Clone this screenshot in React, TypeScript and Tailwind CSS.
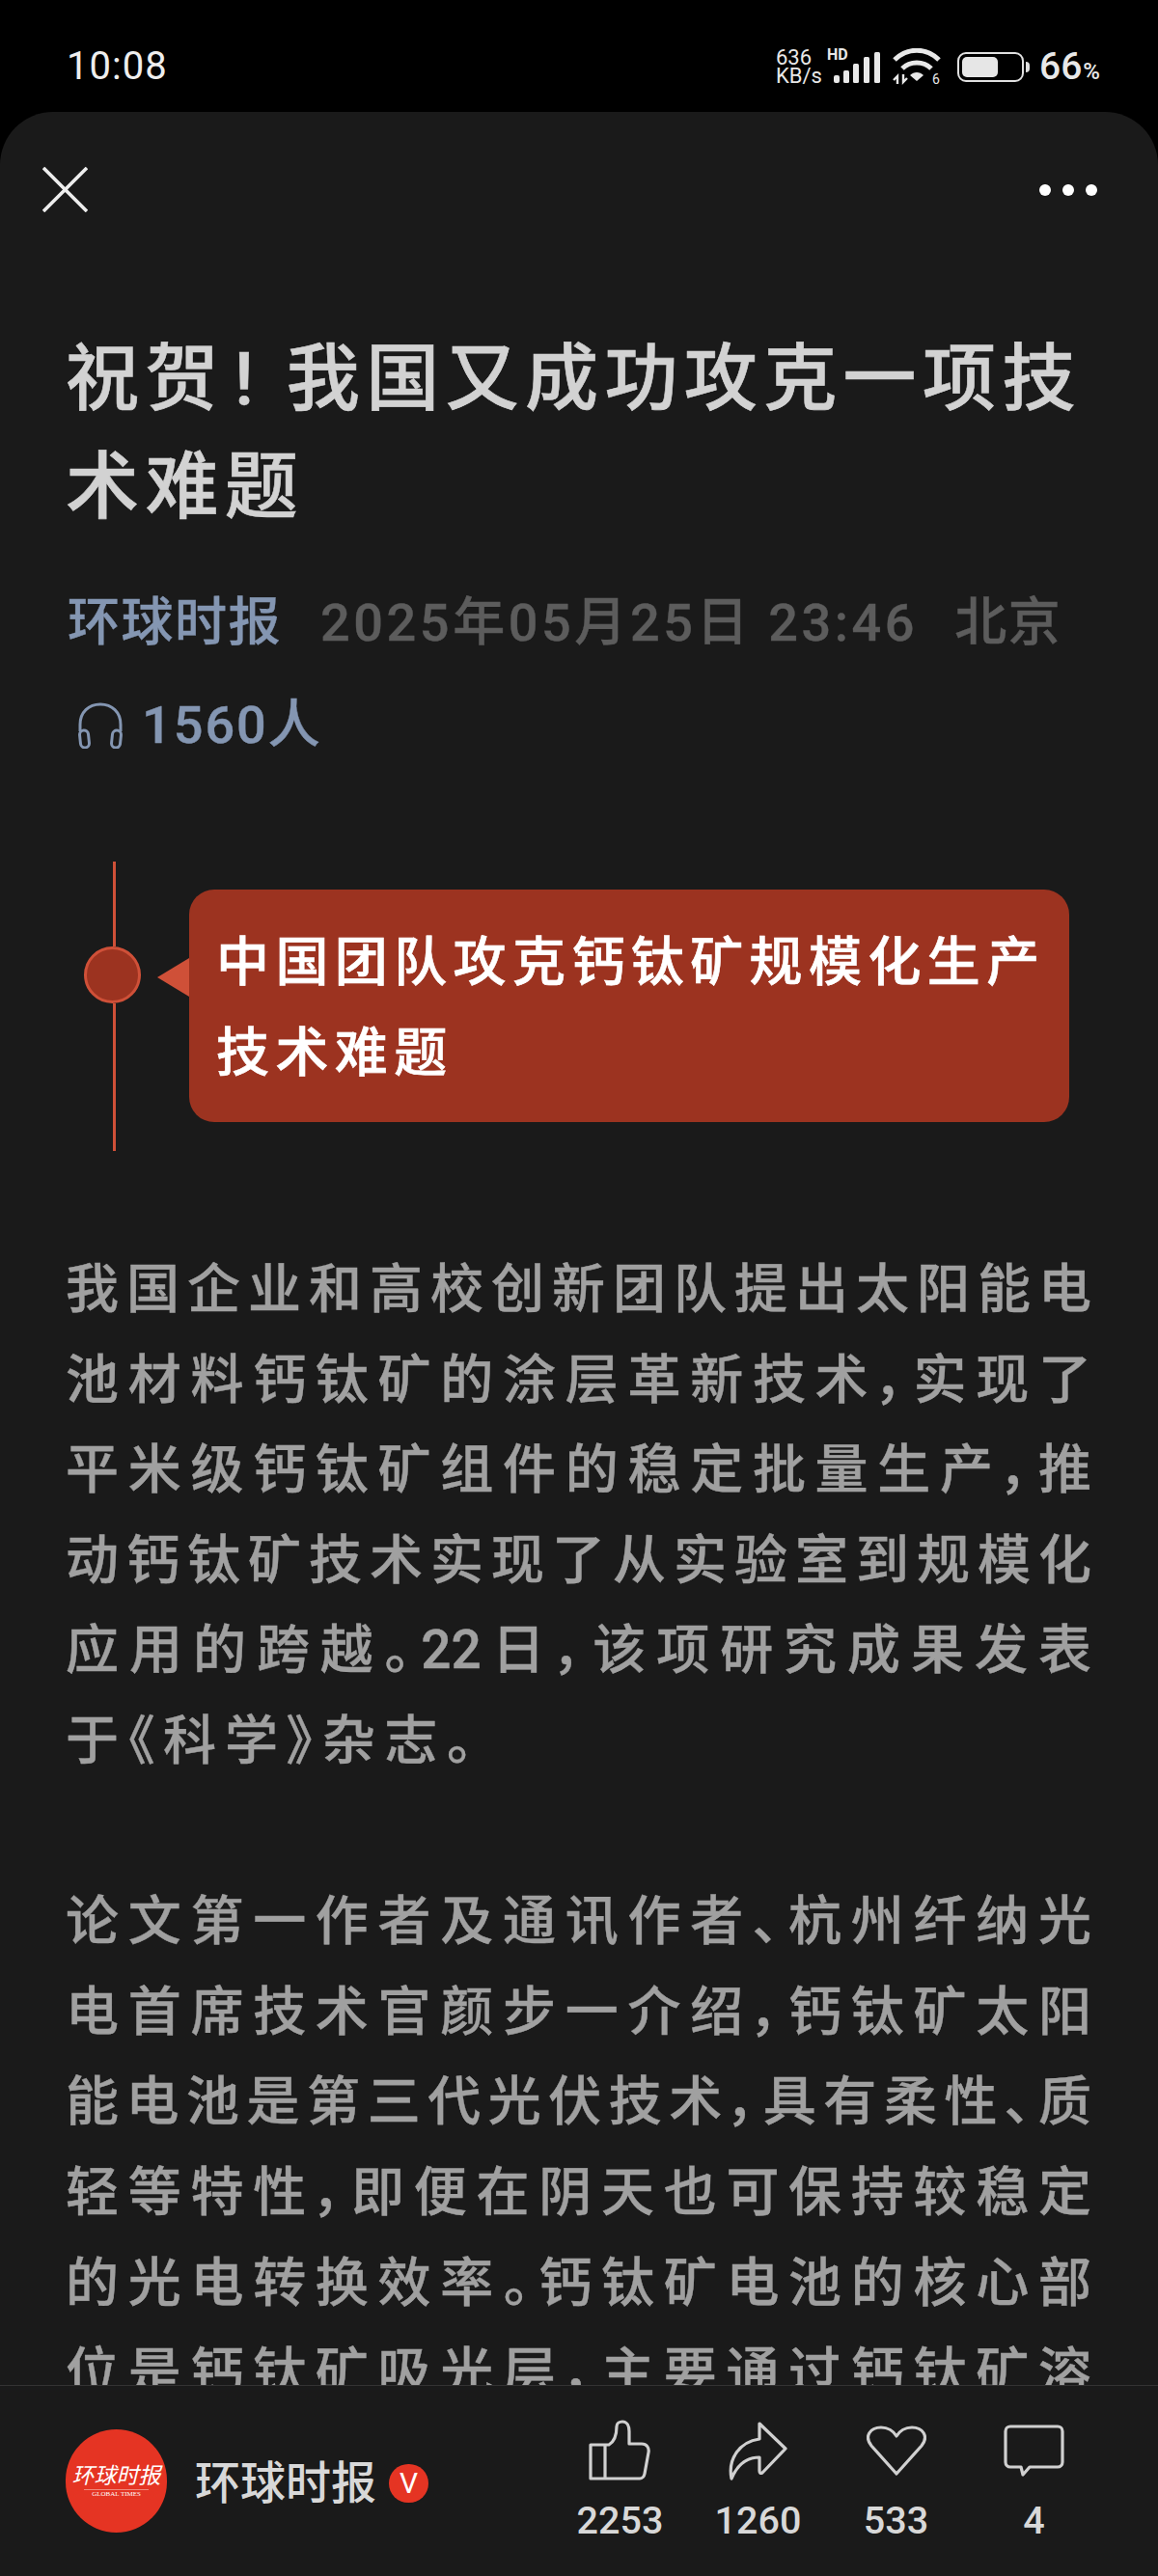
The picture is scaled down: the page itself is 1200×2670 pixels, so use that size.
import React from 'react';

const firstParagraph = [
  '我国企业和高校创新团队提出太阳能电',
  '池材料钙钛矿的涂层革新技术，实现了',
  '平米级钙钛矿组件的稳定批量生产，推',
  '动钙钛矿技术实现了从实验室到规模化',
  '应用的跨越。22日，该项研究成果发表',
];

const secondParagraph = [
  '论文第一作者及通讯作者、杭州纤纳光',
  '电首席技术官颜步一介绍，钙钛矿太阳',
  '能电池是第三代光伏技术，具有柔性、质',
  '轻等特性，即便在阴天也可保持较稳定',
  '的光电转换效率。钙钛矿电池的核心部',
  '位是钙钛矿吸光层，主要通过钙钛矿溶',
];

const StatusIcons: React.FC = () => (
  <div className="flex items-center font-['Roboto',sans-serif] text-[#e8e8e8]">
    <div className="flex flex-col text-[22px] leading-[19px] w-[60px]">
      <span>636</span>
      <span>KB/s</span>
    </div>
    <div className="relative w-[48px] h-[32px] mt-[1px]">
      <span className="absolute left-[-7px] top-[-6px] text-[16px] leading-[18px] font-bold">HD</span>
      <svg width="48" height="32" viewBox="0 0 48 32" fill="currentColor">
        <rect x="0" y="24" width="6" height="8" rx="2" />
        <rect x="10" y="19" width="6" height="13" rx="1.5" />
        <rect x="20" y="12" width="6" height="20" rx="1.5" />
        <rect x="31" y="5" width="6" height="27" rx="1.5" />
        <rect x="42" y="0" width="6" height="32" rx="1.5" />
      </svg>
    </div>
    <svg className="ml-[13px]" width="50" height="38" viewBox="0 0 50 38" fill="none" stroke="currentColor">
      <path d="M2 12C15 -1 35 -1 48 12" strokeWidth="5" />
      <path d="M10 21C18 13 32 13 40 21" strokeWidth="5" />
      <path d="M18 28C22 24 28 24 32 28L25 34Z" fill="currentColor" stroke="none" />
      <path d="M5 37V29L1 33M11 27V35L15 31" strokeWidth="2.4" />
      <text x="41" y="37" fontSize="14" fill="currentColor" stroke="none">6</text>
    </svg>
    <div className="ml-[17px] w-[69px] h-[31px] rounded-[9px] border-2 border-[#e0e0e0] p-[3px] mt-[1px]">
      <div className="w-[37px] h-full rounded-[5px] bg-[#e6e6e6]" />
    </div>
    <div className="ml-[2px] w-[4px] h-[11px] rounded-r-full bg-[#e0e0e0]" />
    <span className="ml-[10px] text-[39px] leading-[40px] font-medium">66</span>
    <span className="ml-[1px] mt-[10px] text-[24px] leading-[24px] font-medium">%</span>
  </div>
);

const ThumbIcon: React.FC = () => (
  <svg width="65" height="64" viewBox="-2 -2 65 64" fill="none" stroke="#d0d0d0" strokeWidth="3.2" strokeLinejoin="round">
    <path d="M0 24H19C24 21 27 14 27 5C27 2 30 0 33 0C38 0 40 5 40 10V23H53C58 23 61 27 60 32L56 54C55.500 57 53 59 51 59H0Z" />
    <path d="M15 24V59" />
  </svg>
);

const ShareIcon: React.FC = () => (
  <svg width="63" height="63" viewBox="-2 -2 63 63" fill="none" stroke="#d0d0d0" strokeWidth="3.2" strokeLinejoin="round">
    <path d="M31 1L58 27L34 52C32 53 31 52 31 50V36C18 36 8 44 2 58C-2 38 10 20 31 17Z" />
  </svg>
);

const HeartIcon: React.FC = () => (
  <svg width="62" height="52" viewBox="0 0 62 52" fill="none" stroke="#d0d0d0" strokeWidth="3.2" strokeLinejoin="round">
    <path d="M31 50L5 21C-3 11 4 2 15 2C22 2 28 6 31 11C34 6 40 2 47 2C58 2 65 11 57 21Z" />
  </svg>
);

const CommentIcon: React.FC = () => (
  <svg width="63" height="54" viewBox="0 0 63 54" fill="none" stroke="#d0d0d0" strokeWidth="3.2" strokeLinejoin="round">
    <path d="M7 2H56A5 5 0 0 1 61 7V39A5 5 0 0 1 56 44H27L20 52L18 44H7A5 5 0 0 1 2 39V7A5 5 0 0 1 7 2Z" />
  </svg>
);

const stats = [
  { icon: <ThumbIcon />, count: '2253' },
  { icon: <ShareIcon />, count: '1260' },
  { icon: <HeartIcon />, count: '533' },
  { icon: <CommentIcon />, count: '4' },
];

const App: React.FC = () => {
  return (
    <div className="w-[1200px] h-[2670px] bg-black flex flex-col overflow-hidden font-['Roboto','Noto_Sans_CJK_SC',sans-serif]">
      {/* status bar */}
      <div className="h-[116px] shrink-0 flex items-start justify-between pl-[69px] pr-[60px] pt-[49px]">
        <span className="text-[40px] leading-[40px] tracking-[1px] text-[#eeeeee]">10:08</span>
        <StatusIcons />
      </div>

      <div className="flex-1 min-h-0 flex flex-col bg-[#1a1a1a] rounded-t-[55px]">
        <div className="flex-1 min-h-0 overflow-hidden">
          {/* top actions */}
          <div className="flex items-center justify-between pl-[44px] pr-[63px] pt-[57px]">
            <svg width="47" height="47" viewBox="0 0 47 47" fill="none" stroke="#eeeeee" strokeWidth="3.6">
              <path d="M1 1L46 46M46 1L1 46" />
            </svg>
            <div className="flex gap-[12px]">
              <div className="w-[12px] h-[12px] rounded-full bg-white" />
              <div className="w-[12px] h-[12px] rounded-full bg-white" />
              <div className="w-[12px] h-[12px] rounded-full bg-white" />
            </div>
          </div>

          {/* headline */}
          <h1 className="mt-[117px] pl-[68px] text-[76px] leading-[112px] font-medium tracking-[6.400px] text-[#d2d2d2] [-webkit-text-stroke:0.6px_#d2d2d2]">
            <div className="whitespace-nowrap">
              祝贺<span className="inline-block w-[64px] pl-[10px]">!</span>我国又成功攻克一项技
            </div>
            <div>术难题</div>
          </h1>

          {/* source line */}
          <div className="mt-[31px] pl-[70px] flex text-[54px] leading-[107px] font-medium whitespace-nowrap [-webkit-text-stroke:0.4px]">
            <span className="text-[#8496b2] tracking-[1.5px]">环球时报</span>
            <span className="ml-[40px] text-[#5c5c5c] tracking-[3.600px]">2025年05月25日 23:46</span>
            <span className="ml-[38px] text-[#5c5c5c] tracking-[1.5px]">北京</span>
          </div>
          <div className="pl-[80px] flex items-center h-[105px] text-[54px] font-medium tracking-[2px] text-[#8496b2] [-webkit-text-stroke:0.4px]">
            <svg width="48" height="48" viewBox="0 0 48 48" fill="none" stroke="#8496b2" strokeWidth="3">
              <path d="M3 30V23C3 10 12 2 24 2C36 2 45 10 45 23V30" />
              <rect x="3" y="29" width="9" height="18" rx="4.5" transform="rotate(-6 7 38)" />
              <rect x="36" y="29" width="9" height="18" rx="4.5" transform="rotate(6 40 38)" />
            </svg>
            <span className="ml-[19px]">1560人</span>
          </div>

          {/* highlighted summary with timeline marker */}
          <div className="mt-[89px] pl-[87px] flex items-start">
            <div className="w-[59px] flex flex-col items-center">
              <div className="w-[3px] h-[88px] bg-[#cf5038] ml-[3px]" />
              <div className="w-[59px] h-[59px] rounded-full border-[3px] border-[#cf5038] bg-[#9c3320]" />
              <div className="w-[3px] h-[153px] bg-[#cf5038] ml-[3px]" />
            </div>
            <div className="relative ml-[50px] mt-[29px] w-[912px] h-[241px] rounded-[26px] bg-[#9c3320] pl-[28px] pt-[28px] text-[55px] leading-[94px] font-medium tracking-[6.400px] text-white [-webkit-text-stroke:0.6px_#ffffff]">
              <div className="absolute left-[-33px] top-[71px] w-[33px] h-[40px] bg-[#cf5038] [clip-path:polygon(0_50%,100%_0,100%_100%)]" />
              <div className="whitespace-nowrap">中国团队攻克钙钛矿规模化生产</div>
              <div>技术难题</div>
            </div>
          </div>

          {/* article body */}
          <div className="mt-[97px] pl-[68px] pr-[69px] text-[55px] leading-[93.6px] font-medium text-[#a0a0a0] [font-feature-settings:'palt'] [-webkit-text-stroke:0.4px_#a0a0a0]">
            {firstParagraph.map((line) => (
              <p key={line} className="whitespace-nowrap [text-align-last:justify]">{line}</p>
            ))}
            <p className="tracking-[9.200px]">于《科学》杂志。</p>
            <div className="h-[93.6px]" />
            {secondParagraph.map((line) => (
              <p key={line} className="whitespace-nowrap [text-align-last:justify]">{line}</p>
            ))}
          </div>
        </div>

        {/* author and reactions */}
        <div className="h-[198px] shrink-0 border-t border-[#333333] flex items-start pl-[68px] pt-[45px]">
          <div className="w-[105px] h-[107px] rounded-full bg-[#e53423] flex flex-col items-center justify-center text-white">
            <span className="text-[23px] leading-[26px] italic whitespace-nowrap">环球时报</span>
            <span className="text-[7px] leading-[8px] font-['Liberation_Serif',serif] border-t border-[#f08a7c] px-[8px]">GLOBAL TIMES</span>
          </div>
          <div className="ml-[29px] mt-[29px] flex items-center">
            <span className="text-[47px] leading-[54px] font-medium text-[#d8d8d8]">环球时报</span>
            <div className="ml-[13px] w-[41px] h-[40px] rounded-full bg-[#e53423] flex items-center justify-center text-[30px] leading-none text-white">V</div>
          </div>
          <div className="ml-auto mr-[57px] flex">
            {stats.map((stat) => (
              <div key={stat.count} className="w-[143px] flex flex-col items-center">
                <div className="h-[64px] flex items-center justify-center -mt-[10px]">{stat.icon}</div>
                <span className="mt-[21px] text-[39.500px] leading-[40px] font-medium text-[#d8d8d8]">{stat.count}</span>
              </div>
            ))}
          </div>
        </div>
      </div>
    </div>
  );
};

export default App;
